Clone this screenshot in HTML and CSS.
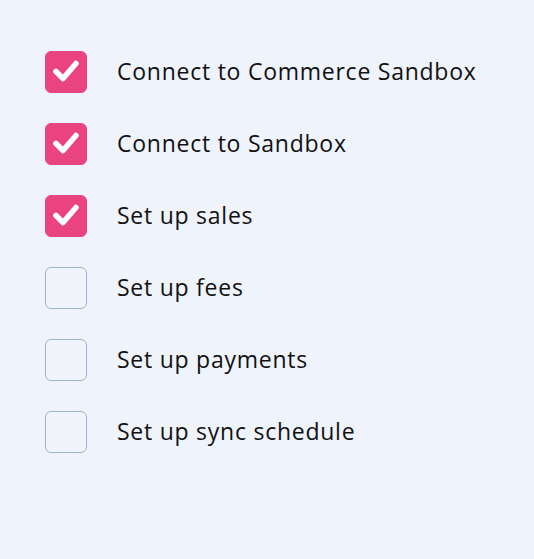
FILE: index.html
```html
<!DOCTYPE html>
<html>
<head>
<meta charset="utf-8">
<link rel="stylesheet" href="styles.css">
</head>
<body>
<ul class="list">
  <li class="item"><span class="box checked"><svg viewBox="0 0 42 42" width="42" height="42"><path d="M11 20.5 L18 27.5 L31 12.5" fill="none" stroke="#fff" stroke-width="5.5" stroke-linecap="round" stroke-linejoin="round"/></svg></span><span class="label">Connect to Commerce Sandbox</span></li>
  <li class="item"><span class="box checked"><svg viewBox="0 0 42 42" width="42" height="42"><path d="M11 20.5 L18 27.5 L31 12.5" fill="none" stroke="#fff" stroke-width="5.5" stroke-linecap="round" stroke-linejoin="round"/></svg></span><span class="label">Connect to Sandbox</span></li>
  <li class="item"><span class="box checked"><svg viewBox="0 0 42 42" width="42" height="42"><path d="M11 20.5 L18 27.5 L31 12.5" fill="none" stroke="#fff" stroke-width="5.5" stroke-linecap="round" stroke-linejoin="round"/></svg></span><span class="label">Set up sales</span></li>
  <li class="item"><span class="box"></span><span class="label">Set up fees</span></li>
  <li class="item"><span class="box"></span><span class="label">Set up payments</span></li>
  <li class="item"><span class="box"></span><span class="label">Set up sync schedule</span></li>
</ul>
</body>
</html>
```
FILE: styles.css
```css
html, body {
  margin: 0;
  padding: 0;
  background: #eff3fb;
  height: 100%;
}
.list {
  list-style: none;
  margin: 0;
  padding: 51px 0 0 45px;
  display: flex;
  flex-direction: column;
  gap: 30px;
}
.item {
  display: flex;
  align-items: center;
  gap: 30px;
  height: 42px;
}
.box {
  width: 42px;
  height: 42px;
  box-sizing: border-box;
  border: 1px solid #9fb2cf;
  border-radius: 6px;
  background: #f1f4fb;
  flex: none;
  display: flex;
}
.box.checked {
  background: #e9447f;
  border-color: #e9447f;
}
.box svg { display: block; margin: -1px; }
.label {
  font-family: "Open Sans", sans-serif;
  font-size: 23px;
  font-weight: 500;
  color: #111;
  letter-spacing: 0.75px;
  line-height: 1;
  padding-bottom: 2px;
}
```
